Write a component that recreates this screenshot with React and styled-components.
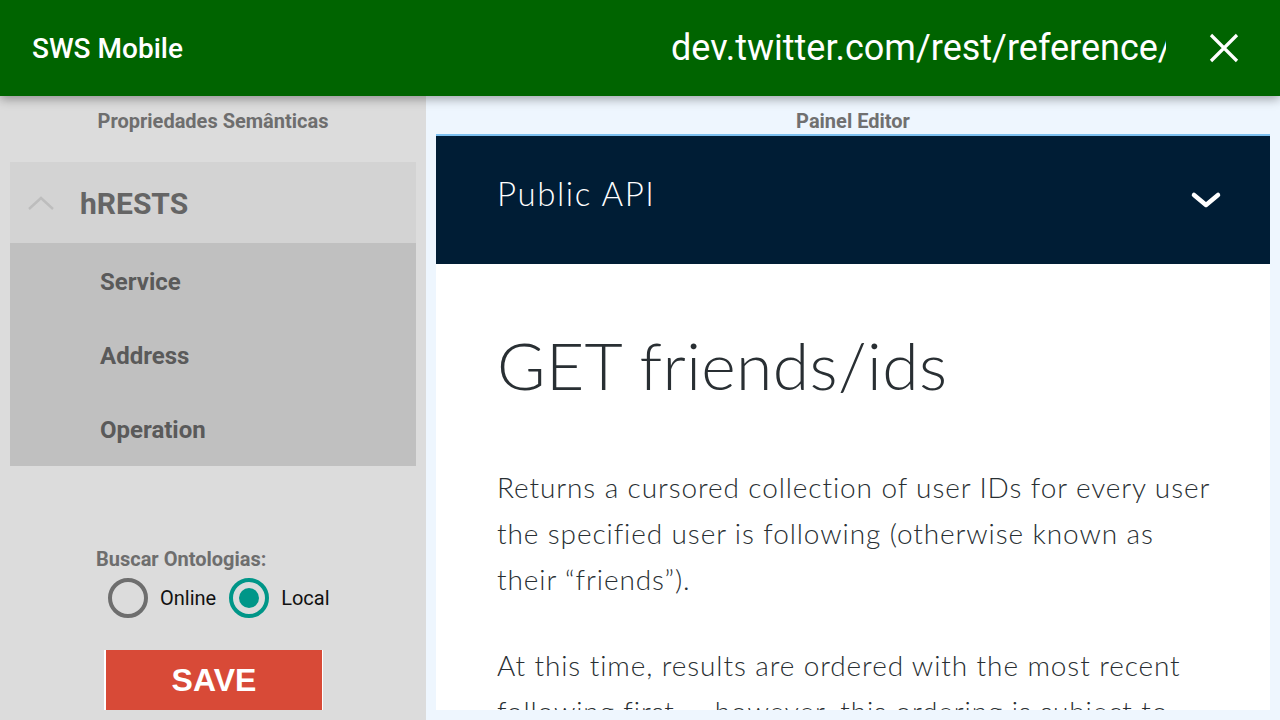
import React from 'react'
import styled, { createGlobalStyle } from 'styled-components'

const GlobalStyle = createGlobalStyle`
    html, body {
        margin: 0;
        padding: 0;
        overflow: hidden;
    }
    body {
        font-family: Roboto, "Noto Sans", sans-serif;
    }
`

function App() {
    return (
        <Page>
            <GlobalStyle />
            <AppBar>
                <Title>SWS Mobile</Title>
                <Url>dev.twitter.com/rest/reference/get/friends/ids</Url>
                <CloseButton aria-label="close">
                    <svg width="30" height="30" viewBox="0 0 30 30">
                        <path d="M2 2 L28 28 M28 2 L2 28" stroke="#fff" strokeWidth="3.2" />
                    </svg>
                </CloseButton>
            </AppBar>
            <Body>
                <Sidebar>
                    <PanelTitle>Propriedades Semânticas</PanelTitle>
                    <Accordion>
                        <AccordionHeader>
                            <svg width="26" height="14" viewBox="0 0 26 14">
                                <path d="M1 13 L13 2 L25 13" stroke="#bdbdbd" strokeWidth="2.4" fill="none" />
                            </svg>
                            <span>hRESTS</span>
                        </AccordionHeader>
                        <Item>Service</Item>
                        <Item>Address</Item>
                        <Item>Operation</Item>
                    </Accordion>
                    <Ontologies>
                        <Label>Buscar Ontologias:</Label>
                        <RadioRow>
                            <Radio />
                            <RadioText>Online</RadioText>
                            <Radio checked />
                            <RadioText>Local</RadioText>
                        </RadioRow>
                    </Ontologies>
                    <SaveButton>SAVE</SaveButton>
                </Sidebar>
                <EditorPane>
                    <PanelTitle>Painel Editor</PanelTitle>
                    <WebView>
                        <TwitterNav>
                            <span>Public API</span>
                            <svg width="32" height="20" viewBox="0 0 32 20">
                                <path d="M4 5 L16 15 L28 5" stroke="#fff" strokeWidth="4.5" strokeLinecap="round" strokeLinejoin="round" fill="none" />
                            </svg>
                        </TwitterNav>
                        <Content>
                            <Heading>GET friends/ids</Heading>
                            <Paragraph>
                                Returns a cursored collection of user IDs for every user the specified user is following (otherwise known as their “friends”).
                            </Paragraph>
                            <Paragraph>
                                At this time, results are ordered with the most recent following first — however, this ordering is subject to unannounced change and eventual consistency issues.
                            </Paragraph>
                        </Content>
                    </WebView>
                </EditorPane>
            </Body>
        </Page>
    )
}

export default App

const Page = styled.div`
    width: 1280px;
    height: 720px;
    display: flex;
    flex-direction: column;
    overflow: hidden;
`

const AppBar = styled.header`
    height: 96px;
    flex-shrink: 0;
    background: #006400;
    display: flex;
    align-items: center;
    padding: 0 41px 0 32px;
    box-shadow: 0 3px 10px rgba(0, 0, 0, 0.35);
    position: relative;
    z-index: 2;
    color: #fff;
`

const Title = styled.div`
    font-size: 28px;
    font-weight: 500;
`

const Url = styled.div`
    margin-left: auto;
    width: 495px;
    font-size: 36px;
    white-space: nowrap;
    overflow: hidden;
`

const CloseButton = styled.button`
    margin-left: 43px;
    background: none;
    border: none;
    padding: 0;
    display: flex;
`

const Body = styled.div`
    flex: 1;
    display: flex;
    min-height: 0;
`

const Sidebar = styled.aside`
    width: 426px;
    background: #dcdcdc;
    display: flex;
    flex-direction: column;
`

const PanelTitle = styled.div`
    text-align: center;
    font-size: 20px;
    font-weight: 700;
    color: #6e6e6e;
    line-height: 24px;
    padding: 13px 0 1px;
`

const Accordion = styled.div`
    margin: 28px 10px 0;
`

const AccordionHeader = styled.div`
    height: 81px;
    background: #d3d3d3;
    display: flex;
    align-items: center;
    padding-left: 18px;
    gap: 26px;

    span {
        font-size: 30px;
        font-weight: 700;
        color: #656565;
        margin-top: 2px;
    }
`

const Item = styled.div`
    height: 74px;
    background: #c0c0c0;
    display: flex;
    align-items: center;
    padding: 3px 0 0 90px;
    box-sizing: border-box;
    font-size: 24px;
    font-weight: 700;
    color: #5a5a5a;

    &:last-child {
        height: 75px;
    }
`

const Ontologies = styled.div`
    margin-top: 80px;
    padding-left: 96px;
`

const Label = styled.div`
    font-size: 20px;
    font-weight: 700;
    color: #6e6e6e;
    line-height: 26px;
`

const RadioRow = styled.div`
    display: flex;
    align-items: center;
    margin: 6px 0 0 12px;
`

const Radio = styled.span`
    width: 40px;
    height: 40px;
    box-sizing: border-box;
    border-radius: 50%;
    border: 4px solid ${p => (p.checked ? '#009688' : '#6e6e6e')};
    display: flex;
    align-items: center;
    justify-content: center;

    &::after {
        content: '';
        width: 20px;
        height: 20px;
        border-radius: 50%;
        background: ${p => (p.checked ? '#009688' : 'transparent')};
    }
`

const RadioText = styled.span`
    font-size: 20px;
    color: #111;
    margin: 0 13px 0 12px;
`

const SaveButton = styled.button`
    margin: 32px 0 0 104px;
    width: 219px;
    height: 60px;
    background: #d84a37;
    border: none;
    border-left: 2px solid #fff;
    border-right: 1px solid #fff;
    color: #fff;
    font-family: "Liberation Sans", Arial, sans-serif;
    font-weight: 700;
    font-size: 32px;
    padding: 0;
`

const EditorPane = styled.section`
    flex: 1;
    background: #eef6fe;
    padding: 0 10px 10px;
    display: flex;
    flex-direction: column;
    min-width: 0;

    ${PanelTitle} {
        color: #707070;
    }
`

const WebView = styled.div`
    flex: 1;
    background: #fff;
    border-top: 2px solid #7cc0f0;
    overflow: hidden;
`

const TwitterNav = styled.div`
    height: 128px;
    background: #001d35;
    display: flex;
    align-items: center;
    justify-content: space-between;
    padding: 0 48px 0 61px;
    color: #fff;
    font-family: Lato, "Open Sans", sans-serif;
    font-weight: 300;
    font-size: 33px;
    letter-spacing: 1.6px;

    span {
        margin-top: -14px;
    }
`

const Content = styled.div`
    padding: 63px 50px 0 61px;
    font-family: Lato, "Open Sans", sans-serif;
    font-weight: 300;
    color: #292f33;
`

const Heading = styled.h1`
    margin: 0 0 61px;
    font-size: 66px;
    font-weight: 300;
    line-height: 76px;
    letter-spacing: 0.4px;
`

const Paragraph = styled.p`
    margin: 0 0 40px;
    font-size: 28px;
    line-height: 46px;
    letter-spacing: 0.9px;
`
